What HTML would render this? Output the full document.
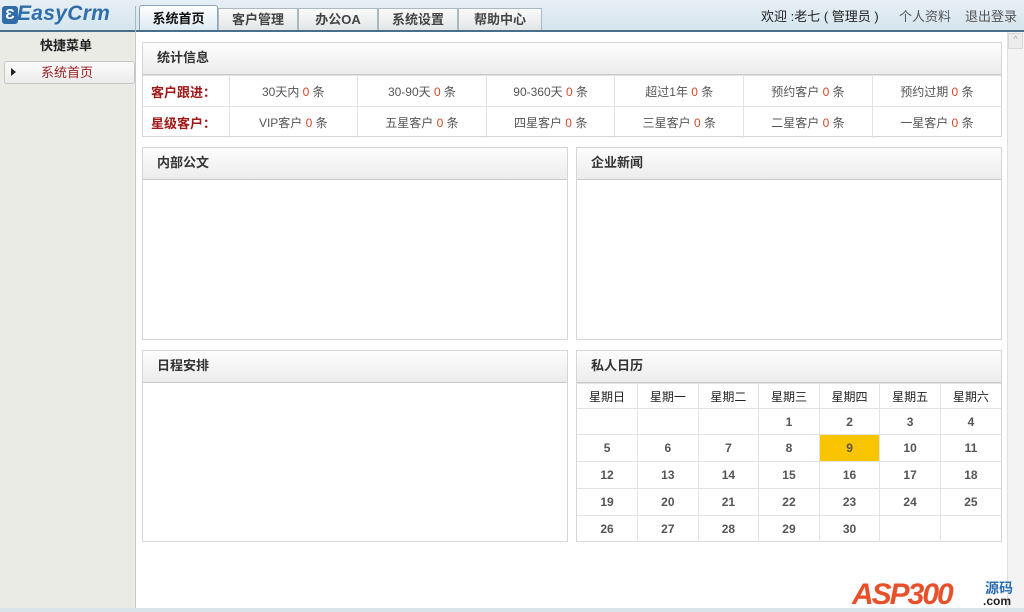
<!DOCTYPE html>
<html><head><meta charset="utf-8"><style>
*{margin:0;padding:0;box-sizing:border-box}
body{width:1024px;height:612px;overflow:hidden;background:#fff;font-family:"Liberation Sans","Noto Sans CJK SC",sans-serif;font-size:12px;color:#333;position:relative}
.abs{position:absolute}
#hdr{left:0;top:0;width:1024px;height:32px;background:linear-gradient(#e6eff5,#d6e5ee);border-bottom:2px solid #4a6f8a}
.logo{left:17px;top:2px;font:italic 900 21px "Liberation Sans",sans-serif;color:#2f6ea8;letter-spacing:0.3px}
.tab{top:8px;height:22px;border:1px solid #aab8c2;border-bottom:none;background:linear-gradient(#fafafa,#e2e6e8);text-align:center;line-height:22px;font-size:13px;font-weight:bold;color:#444}
.tab.act{top:5px;height:25px;line-height:25px;background:linear-gradient(#ffffff,#dde9f2);color:#111;border-color:#8fa4b4;border-radius:3px 3px 0 0}
#side{left:0;top:32px;width:136px;height:580px;background:#ebebe6;border-right:1px solid #c8c8c8}
.panel{border:1px solid #d6d6d6;background:#fff}
.ph{height:32px;background:linear-gradient(#fdfdfd,#ececec);border-bottom:1px solid #c9c9c9;font-weight:bold;font-size:13px;line-height:30px;padding-left:14px;color:#333}
table{border-collapse:collapse;table-layout:fixed}
td{border:1px solid #e3e3e3;text-align:center;color:#555}
.r{color:#d04a2a}
.lbl{color:#a01818;font-weight:bold;font-size:13px}
.cal td{font-weight:bold;color:#555;font-size:12px}
</style></head><body>
<div id="hdr" class="abs"></div>
<div class="abs" style="left:2px;top:6px;width:16px;height:18px;border-radius:3px;background:#2f6ea8;color:#fff;font:bold 15px 'Liberation Sans',sans-serif;text-align:center;line-height:18px">Ɛ</div>
<div class="abs logo">EasyCrm</div>
<div class="abs" style="left:135px;top:6px;width:1px;height:26px;background:#aab8c2"></div>
<div class="abs tab act" style="left:139px;width:79px">系统首页</div>
<div class="abs tab" style="left:218px;width:80px">客户管理</div>
<div class="abs tab" style="left:298px;width:80px">办公OA</div>
<div class="abs tab" style="left:378px;width:80px">系统设置</div>
<div class="abs tab" style="left:458px;width:84px">帮助中心</div>
<div class="abs" style="left:761px;top:6px;font-size:13px;color:#222">欢迎 :老七 ( 管理员 )</div>
<div class="abs" style="left:899px;top:6px;font-size:13px;color:#555">个人资料</div>
<div class="abs" style="left:965px;top:6px;font-size:13px;color:#555">退出登录</div>
<div id="side" class="abs"></div>
<div class="abs" style="left:0;top:35px;width:132px;text-align:center;font-weight:bold;font-size:13px;color:#222">快捷菜单</div>
<div class="abs" style="left:4px;top:61px;width:131px;height:23px;border:1px solid #c6c6c6;border-radius:3px;background:linear-gradient(#fbfbfb,#ececec)"></div>
<div class="abs" style="left:11px;top:68px;width:0;height:0;border-left:5px solid #222;border-top:4px solid transparent;border-bottom:4px solid transparent"></div>
<div class="abs" style="left:41px;top:62px;font-size:13px;color:#9a1c1c">系统首页</div>
<div class="abs" style="left:1007px;top:32px;width:17px;height:580px;background:#f3f3f3;border-left:1px solid #e0e0e0"></div>
<div class="abs" style="left:1008px;top:33px;width:15px;height:16px;background:#ececec;border:1px solid #d8d8d8;color:#aaa;font-size:9px;text-align:center">^</div>

<div class="abs panel" style="left:142px;top:42px;width:860px;height:95px">
<div class="ph">统计信息</div>
<table style="width:858px;font-size:12px">
<col style="width:86px"><col><col><col><col><col><col>
<tr style="height:31px"><td class="lbl" style="text-align:left;padding-left:8px;border-left:none">客户跟进：</td><td>30天内 <span class="r">0</span> 条</td><td>30-90天 <span class="r">0</span> 条</td><td>90-360天 <span class="r">0</span> 条</td><td>超过1年 <span class="r">0</span> 条</td><td>预约客户 <span class="r">0</span> 条</td><td style="border-right:none">预约过期 <span class="r">0</span> 条</td></tr>
<tr style="height:31px"><td class="lbl" style="text-align:left;padding-left:8px;border-left:none;border-bottom:none">星级客户：</td><td style="border-bottom:none">VIP客户 <span class="r">0</span> 条</td><td style="border-bottom:none">五星客户 <span class="r">0</span> 条</td><td style="border-bottom:none">四星客户 <span class="r">0</span> 条</td><td style="border-bottom:none">三星客户 <span class="r">0</span> 条</td><td style="border-bottom:none">二星客户 <span class="r">0</span> 条</td><td style="border:none">一星客户 <span class="r">0</span> 条</td></tr>
</table></div>

<div class="abs panel" style="left:142px;top:147px;width:426px;height:193px"><div class="ph">内部公文</div></div>
<div class="abs panel" style="left:576px;top:147px;width:426px;height:193px"><div class="ph">企业新闻</div></div>
<div class="abs panel" style="left:142px;top:350px;width:426px;height:192px"><div class="ph">日程安排</div></div>
<div class="abs panel" style="left:576px;top:350px;width:426px;height:192px"><div class="ph">私人日历</div>
<table class="cal" style="width:424px">
<tr style="height:25px"><td style="font-weight:normal;color:#222;border-left:none">星期日</td><td style="font-weight:normal;color:#222">星期一</td><td style="font-weight:normal;color:#222">星期二</td><td style="font-weight:normal;color:#222">星期三</td><td style="font-weight:normal;color:#222">星期四</td><td style="font-weight:normal;color:#222">星期五</td><td style="font-weight:normal;color:#222;border-right:none">星期六</td></tr>
<tr style="height:26px"><td style="border-left:none"></td><td></td><td></td><td>1</td><td>2</td><td>3</td><td style="border-right:none">4</td></tr>
<tr style="height:27px"><td style="border-left:none">5</td><td>6</td><td>7</td><td>8</td><td style="background:#f9c400">9</td><td>10</td><td style="border-right:none">11</td></tr>
<tr style="height:27px"><td style="border-left:none">12</td><td>13</td><td>14</td><td>15</td><td>16</td><td>17</td><td style="border-right:none">18</td></tr>
<tr style="height:27px"><td style="border-left:none">19</td><td>20</td><td>21</td><td>22</td><td>23</td><td>24</td><td style="border-right:none">25</td></tr>
<tr style="height:26px"><td style="border-left:none;border-bottom:none">26</td><td style="border-bottom:none">27</td><td style="border-bottom:none">28</td><td style="border-bottom:none">29</td><td style="border-bottom:none">30</td><td style="border-bottom:none"></td><td style="border:none"></td></tr>
</table></div>

<div class="abs" style="left:852px;top:578px;font:italic bold 30px 'Liberation Sans',sans-serif;color:#e8502a;letter-spacing:-2px">ASP300</div>
<div class="abs" style="left:985px;top:578px;font-size:14px;font-weight:bold;color:#2a6db0">源码</div>
<div class="abs" style="left:983px;top:594px;font-size:12px;font-weight:bold;color:#222">.com</div>
<div class="abs" style="left:0;top:608px;width:1024px;height:4px;background:#d8e4e8"></div>
</body></html>
